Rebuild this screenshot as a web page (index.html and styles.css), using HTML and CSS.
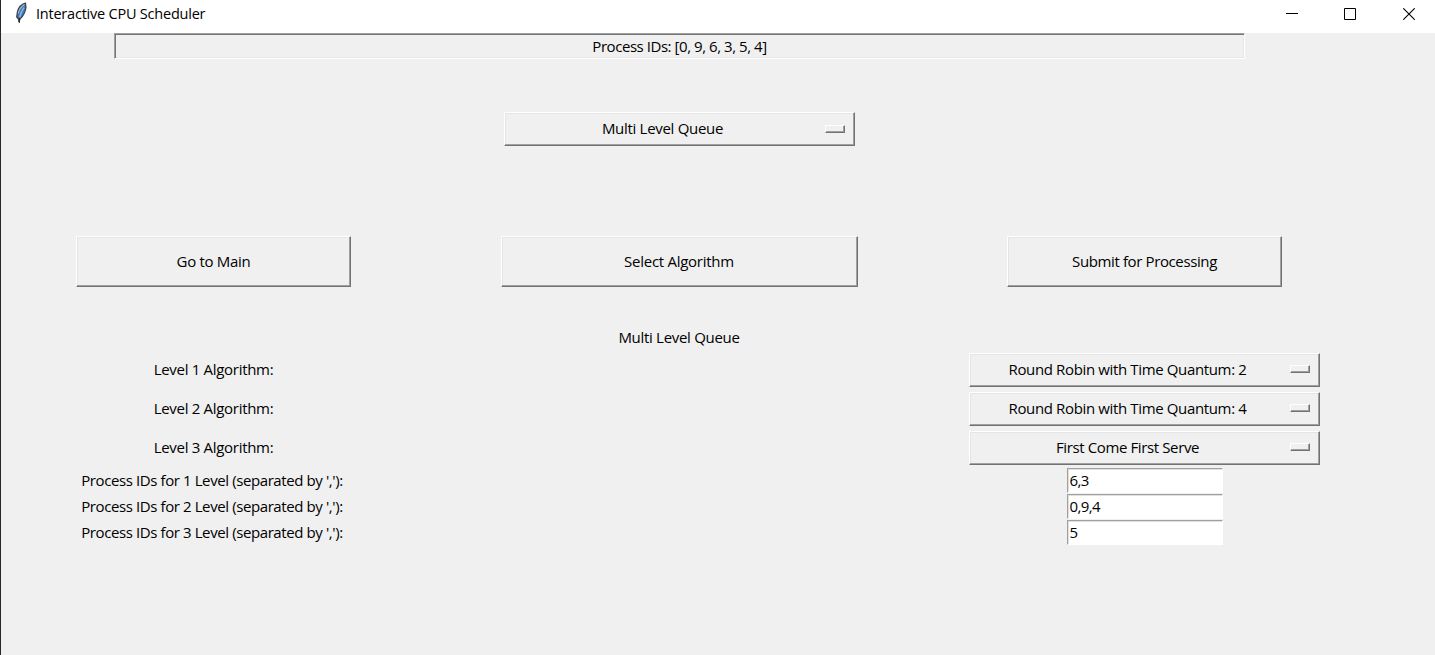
FILE: index.html
```html
<!DOCTYPE html>
<html lang="en">
<head>
<meta charset="utf-8">
<title>Interactive CPU Scheduler</title>
<link rel="stylesheet" href="styles.css">
</head>
<body>
<div class="window">
  <header class="titlebar">
    <svg class="feather" width="14" height="22" viewBox="0 0 14 22">
      <path d="M11.5 1.2C8 2 4.4 5.500 3.300 10.500L2.700 15L4.500 17L5 20L6 17C9 14.500 11.300 10 12 5.500Z" fill="#3f78b5" stroke="#3a3f45" stroke-width="1.200"/>
      <path d="M10.500 2.500C7 4.500 5.300 7 4.200 11.500" fill="none" stroke="#a9b4c0" stroke-width="1.200"/>
      <path d="M10 5.500C7.500 9 6.500 12 5.300 16" fill="none" stroke="#79b2f2" stroke-width="1.600"/>
      <path d="M5.300 15.500V21" stroke="#222" stroke-width="1"/>
    </svg>
    <h1 class="title">Interactive CPU Scheduler</h1>
    <div class="controls">
      <svg width="12" height="12" viewBox="0 0 12 12"><path d="M0 5.500H12" stroke="#000"/></svg>
      <svg width="12" height="12" viewBox="0 0 12 12"><path d="M.5.5H11.5V11.5H.5Z" fill="none" stroke="#000"/></svg>
      <svg width="12" height="12" viewBox="0 0 12 12"><path d="M.3.3L11.7 11.7M11.7.3L.3 11.7" stroke="#000" stroke-width="1.1"/></svg>
    </div>
  </header>
  <main class="content">
    <div class="banner"><span class="t-ids">Process IDs: [0, 9, 6, 3, 5, 4]</span></div>
    <div class="mode"><button class="option"><span class="t-queue">Multi Level Queue</span><i class="indicator"></i></button></div>
    <div class="actions">
      <button class="push"><span class="t-main">Go to Main</span></button>
      <button class="push wide"><span class="t-select">Select Algorithm</span></button>
      <button class="push"><span class="t-submit">Submit for Processing</span></button>
    </div>
    <div class="heading"><span class="t-queue">Multi Level Queue</span></div>
    <div class="row level"><label><span class="t-level">Level 1 Algorithm:</span></label><button class="option"><span class="t-robin">Round Robin with Time Quantum: 2</span><i class="indicator"></i></button></div>
    <div class="row level"><label><span class="t-level">Level 2 Algorithm:</span></label><button class="option"><span class="t-robin">Round Robin with Time Quantum: 4</span><i class="indicator"></i></button></div>
    <div class="row level"><label><span class="t-level">Level 3 Algorithm:</span></label><button class="option"><span class="t-first">First Come First Serve</span><i class="indicator"></i></button></div>
    <div class="row ids"><label><span class="t-proc">Process IDs for 1 Level (separated by ','):</span></label><div class="entry">6,3</div></div>
    <div class="row ids"><label><span class="t-proc">Process IDs for 2 Level (separated by ','):</span></label><div class="entry">0,9,4</div></div>
    <div class="row ids"><label><span class="t-proc">Process IDs for 3 Level (separated by ','):</span></label><div class="entry">5</div></div>
  </main>
</div>
</body>
</html>
```
FILE: styles.css
```css
* { box-sizing: border-box; }
body {
  margin: 0;
  background: #f0f0f0;
  color: #000;
  font: 15px/20px "Open Sans", "Noto Sans", sans-serif;
  overflow: hidden;
}
.window { height: 655px; border-left: 1px solid #2b2727; }
.titlebar { display: flex; height: 33px; background: #fff; padding: 1px 20px 0 13px; }
.feather { margin-top: 1px; }
.title { margin: 3px 0 0 8px; font-size: 14.5px; font-weight: 400; line-height: 20px; letter-spacing: -.22px; }
.controls { display: flex; gap: 47px; margin: 7px 0 0 auto; }
.controls svg:first-child { margin-right: -1px; }
.content { display: flex; flex-direction: column; width: 1356px; }
.banner, .mode, .heading { display: flex; justify-content: center; align-items: center; }
.banner {
  width: 1131px; height: 26px; margin-left: 113px;
  border: 1px solid; border-color: #a0a0a0 #fff #fff #a0a0a0;
  box-shadow: inset 1px 1px #767676, inset -1px -1px #e7e7e7;
}
.mode { margin-top: 53px; padding-left: 1px; }
.option, .push {
  display: flex; align-items: center; justify-content: center;
  margin: 0; padding: 0; background: #f0f0f0; color: #000;
  font: inherit; border: 1px solid; border-color: #fff #727272 #727272 #fff;
  box-shadow: inset -1px -1px #a0a0a0, inset 1px 1px #e5e5e5;
}
.option { width: 351px; height: 34px; padding: 0 9px 0 0; }
.option span { flex: 1; text-align: center; margin-right: 5px; }
.option span, .push span, .heading span { padding-bottom: 2px; }
.indicator {
  width: 20px; height: 8px; margin-bottom: 1px;
  border: 1px solid; border-color: #fff #727272 #727272 #fff;
  box-shadow: inset -1px -1px #a0a0a0;
}
.actions { display: grid; grid-template-columns: 425px 506px 425px; justify-items: center; margin-top: 90px; }
.push { width: 275px; height: 51px; }
.push.wide { width: 357px; }
.heading { height: 20px; margin-top: 41px; }
.row { display: grid; grid-template-columns: 425px 425px; justify-content: space-between; justify-items: center; align-items: center; }
.level { height: 39px; }
.level label { padding-bottom: 2px; }
.heading + .level { margin-top: 2px; }
.ids { height: 26px; }
.ids label { padding-right: 3px; }
.entry {
  width: 156px; height: 25px; padding: 1px 2px; background: #fff;
  border: 1px solid; border-color: #a0a0a0 #fff #fff #a0a0a0;
  box-shadow: inset 1px 1px #e0e0e0;
  letter-spacing: -.6px; line-height: 21px;
}
span { white-space: nowrap; }
.t-ids { letter-spacing: -.45px; }
.t-proc { letter-spacing: -.4px; }
.t-first, .t-submit { letter-spacing: -.38px; }
.t-robin { letter-spacing: -.36px; }
.t-queue, .t-main, .t-level { letter-spacing: -.3px; }
.t-select { letter-spacing: -.27px; }
```
